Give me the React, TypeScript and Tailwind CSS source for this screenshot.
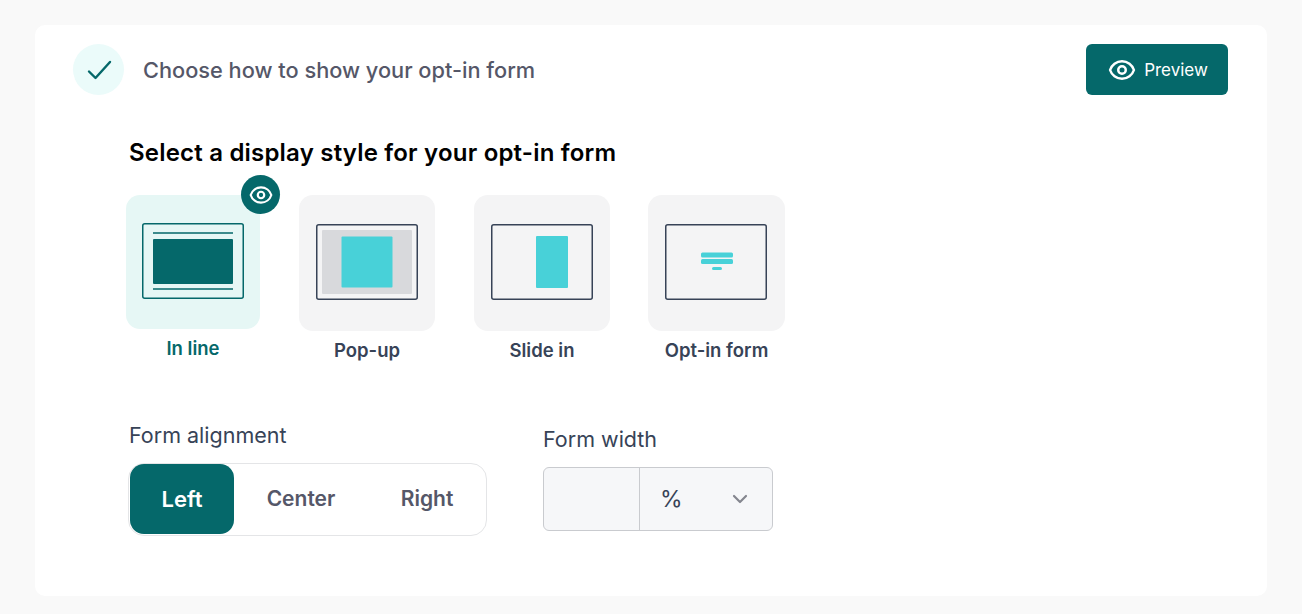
import React from 'react';

const FONT = "font-['Inter','Liberation_Sans',sans-serif]";

function EyeIcon({ size, strokeWidth = 2 }: { size: number; strokeWidth?: number }) {
  return (
    <svg width={size} height={size} viewBox="0 0 24 24" fill="none" stroke="currentColor" strokeWidth={strokeWidth} strokeLinecap="round" strokeLinejoin="round">
      <path d="M15 12a3 3 0 11-6 0 3 3 0 016 0z" />
      <path d="M2.458 12C3.732 7.943 7.523 5 12 5c4.478 0 8.268 2.943 9.542 7-1.274 4.057-5.064 7-9.542 7-4.477 0-8.268-2.943-9.542-7z" />
    </svg>
  );
}

function Frame({ color = '#374357', children }: { color?: string; children?: React.ReactNode }) {
  return (
    <svg width="102" height="76" viewBox="0 0 102 76" fill="none">
      <rect x="0.75" y="0.75" width="100.5" height="74.5" rx="2" stroke={color} strokeWidth="1.5" />
      {children}
    </svg>
  );
}

export default function App() {
  return (
    <div className={`${FONT} h-[614px] w-[1302px] overflow-hidden bg-[#f9f9f9] pl-[35px] pt-[25px]`}>
      <div className="h-[571px] w-[1232px] rounded-[10px] bg-white pl-[38px] pr-[39px] pt-[19px]">
        {/* header */}
        <div className="flex h-[51px] items-center justify-between">
          <div className="flex items-center gap-[19px]">
            <div className="flex h-[51px] w-[51px] items-center justify-center rounded-full bg-[#ebfbfa] text-[#05686a]">
              <svg width="26" height="26" viewBox="0 0 26 26" fill="none" stroke="currentColor" strokeWidth="2.4" strokeLinecap="round" strokeLinejoin="round">
                <path d="M3 14.5l6.5 6.5L24 5" />
              </svg>
            </div>
            <span className="pt-[1px] text-[21.75px] leading-[28px] font-medium text-[#555768]">Choose how to show your opt-in form</span>
          </div>
          <button className="flex h-[51px] w-[142px] items-center justify-center gap-[7px] rounded-[6px] bg-[#05686a] pl-[1px] text-white">
            <EyeIcon size={30} strokeWidth={2} />
            <span className="pt-[2px] text-[17px] font-normal">Preview</span>
          </button>
        </div>

        <div className="pl-[53px]">
          <h2 className="mt-[43px] h-[30px] pl-[3px] text-[24px] leading-[30px] font-semibold tracking-[0.2px] text-black">
            Select a display style for your opt-in form
          </h2>

          {/* display styles */}
          <div className="mt-[27px] flex items-start">
            <div className="w-[134px]">
              <div className="relative flex h-[134px] justify-center rounded-[14px] bg-[#e6f7f5] pt-[28px]">
                <Frame color="#05686a">
                  <path d="M11 10h80M11 66h80" stroke="#05686a" strokeWidth="1.4" />
                  <rect x="11" y="16" width="80" height="45" rx="1" fill="#05686a" />
                </Frame>
                <div className="absolute -right-[20px] -top-[20px] flex h-[39px] w-[39px] items-center justify-center rounded-full bg-[#05686a] text-white">
                  <EyeIcon size={26} strokeWidth={2} />
                </div>
              </div>
              <div className="mt-[7px] text-center text-[18.5px] leading-[24px] font-semibold text-[#05686a]">In line</div>
            </div>

            <div className="ml-[39px] w-[136px]">
              <div className="flex h-[136px] justify-center rounded-[14px] bg-[#f4f4f5] pt-[29px]">
                <Frame>
                  <rect x="6" y="6" width="90" height="64" rx="1" fill="#d8d9dc" />
                  <rect x="25.5" y="12.5" width="51" height="51" rx="1" fill="#48d1d8" />
                </Frame>
              </div>
              <div className="mt-[7px] text-center text-[18.5px] leading-[24px] font-semibold text-[#374357]">Pop-up</div>
            </div>

            <div className="ml-[39px] w-[136px]">
              <div className="flex h-[136px] justify-center rounded-[14px] bg-[#f4f4f5] pt-[29px]">
                <Frame>
                  <rect x="45" y="12" width="32" height="52" rx="1" fill="#48d1d8" />
                </Frame>
              </div>
              <div className="mt-[7px] text-center text-[18.5px] leading-[24px] font-semibold text-[#374357]">Slide in</div>
            </div>

            <div className="ml-[38px] w-[137px]">
              <div className="flex h-[136px] justify-start rounded-[14px] bg-[#f4f4f5] pl-[17px] pt-[29px]">
                <Frame>
                  <rect x="36" y="28.5" width="32" height="5" rx="1.5" fill="#48d1d8" />
                  <rect x="36" y="35" width="32" height="5" rx="1.5" fill="#48d1d8" />
                  <rect x="47" y="43" width="10" height="3" rx="1.5" fill="#48d1d8" />
                </Frame>
              </div>
              <div className="mt-[7px] text-center text-[18.5px] leading-[24px] font-semibold text-[#374357]">Opt-in form</div>
            </div>
          </div>

          {/* form options */}
          <div className="mt-[59px] flex items-start pl-[2px]">
            <div className="w-[359px]">
              <div className="h-[28px] pl-[1px] text-[21.5px] leading-[28px] text-[#374357]">Form alignment</div>
              <div className="mt-[14px] flex h-[73px] items-start rounded-[16px] border border-[#e4e5e7] bg-white pl-[1px] text-[21px] leading-[70px] font-semibold text-[#555768]">
                <div className="h-[70px] w-[104px] rounded-[14px] bg-[#05686a] text-center text-[22px] text-white">Left</div>
                <div className="w-[134px] text-center">Center</div>
                <div className="w-[118px] text-center">Right</div>
              </div>
            </div>
            <div className="ml-[56px] mt-[4px] w-[230px]">
              <div className="h-[28px] text-[21.5px] leading-[28px] text-[#374357]">Form width</div>
              <div className="mt-[14px] flex h-[64px] rounded-[6px] border border-[#c9cbcf] bg-[#f6f7f9]">
                <div className="w-[96px] border-r border-[#c9cbcf]" />
                <div className="flex flex-1 items-center justify-between pl-[20px] pr-[23px] text-[23px] text-[#374357]">
                  <span>%</span>
                  <svg width="18" height="18" viewBox="0 0 18 18" fill="none" stroke="#84868f" strokeWidth="2.2" strokeLinecap="round" strokeLinejoin="round">
                    <path d="M3 6l6 6 6-6" />
                  </svg>
                </div>
              </div>
            </div>
          </div>
        </div>
      </div>
    </div>
  );
}
